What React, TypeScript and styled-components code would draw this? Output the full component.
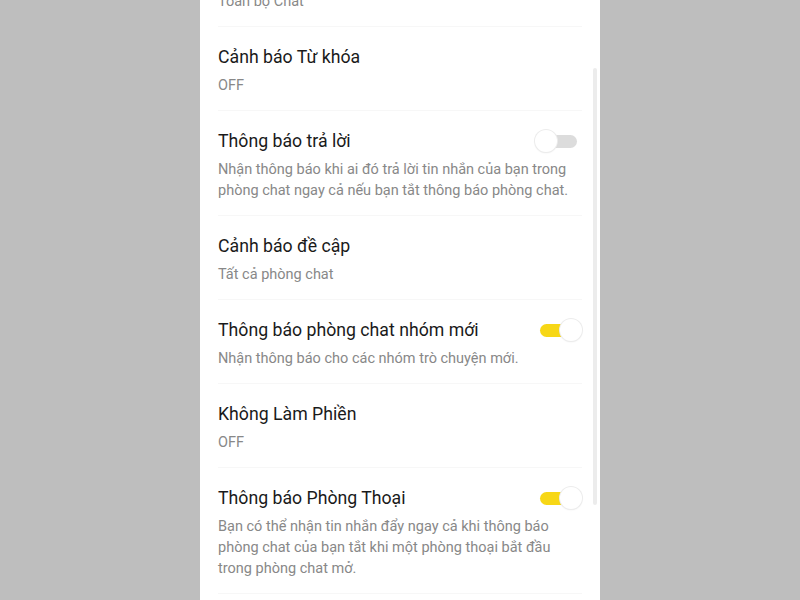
import React, { useLayoutEffect, useRef, useState } from "react";
import styled, { createGlobalStyle } from "styled-components";

type Setting = {
  title: string;
  sub: string;
  toggle?: boolean;
};

const settings: Setting[] = [
  { title: "Xem trước tin nhắn", sub: "Toàn bộ Chat" },
  { title: "Cảnh báo Từ khóa", sub: "OFF" },
  {
    title: "Thông báo trả lời",
    sub: "Nhận thông báo khi ai đó trả lời tin nhắn của bạn trong phòng chat ngay cả nếu bạn tắt thông báo phòng chat.",
    toggle: false,
  },
  { title: "Cảnh báo đề cập", sub: "Tất cả phòng chat" },
  {
    title: "Thông báo phòng chat nhóm mới",
    sub: "Nhận thông báo cho các nhóm trò chuyện mới.",
    toggle: true,
  },
  { title: "Không Làm Phiền", sub: "OFF" },
  {
    title: "Thông báo Phòng Thoại",
    sub: "Bạn có thể nhận tin nhắn đẩy ngay cả khi thông báo phòng chat của bạn tắt khi một phòng thoại bắt đầu trong phòng chat mở.",
    toggle: true,
  },
  { title: "Âm thanh thông báo", sub: "Mặc định" },
];

export default function App() {
  const scrollRef = useRef<HTMLDivElement>(null);
  const [values, setValues] = useState(settings.map((s) => !!s.toggle));

  // the screen is shown scrolled a little down
  useLayoutEffect(() => {
    if (scrollRef.current) scrollRef.current.scrollTop = 57;
  }, []);

  const flip = (i: number) =>
    setValues((v) => v.map((x, j) => (j === i ? !x : x)));

  return (
    <>
      <GlobalStyle />
      <Page>
        <Phone>
          <List ref={scrollRef}>
            {settings.map((s, i) => (
              <Row key={s.title}>
                <TitleLine>
                  <Title>{s.title}</Title>
                  {s.toggle !== undefined && (
                    <Switch on={values[i]} onClick={() => flip(i)}>
                      <Knob />
                    </Switch>
                  )}
                </TitleLine>
                <Sub>{s.sub}</Sub>
              </Row>
            ))}
          </List>
          <ScrollThumb />
        </Phone>
      </Page>
    </>
  );
}

// interface
interface OnProps {
  on: boolean;
}

// styled Components
const GlobalStyle = createGlobalStyle`
  html, body {
    margin: 0;
    padding: 0;
    background: #bebebe;
    font-family: Roboto, "Noto Sans", "Liberation Sans", sans-serif;
  }
`;

const Page = styled.div`
  width: 100%;
  height: 600px;
  display: flex;
  justify-content: center;
`;

const Phone = styled.div`
  width: 400px;
  height: 600px;
  background: #fff;
  position: relative;
  overflow: hidden;
`;

const List = styled.div`
  height: 100%;
  overflow-y: scroll;
  padding: 0 18px;
  box-sizing: border-box;
  scrollbar-width: none;

  &::-webkit-scrollbar {
    display: none;
  }
`;

const Row = styled.div`
  padding: 18px 0 14px;
  border-bottom: 1px solid #f7f7f7;
`;

const TitleLine = styled.div`
  display: flex;
  align-items: center;
  justify-content: space-between;
  height: 24px;
`;

const Title = styled.div`
  font-size: 17.7px;
  line-height: 24px;
  color: #1a1a1a;
`;

const Sub = styled.div`
  margin-top: 6px;
  max-width: 356px;
  font-size: 14.5px;
  line-height: 21px;
  color: #888;
`;

const Switch = styled.div<OnProps>`
  position: relative;
  width: 47px;
  height: 24px;
  flex-shrink: 0;
  display: flex;
  align-items: center;
  justify-content: ${(p) => (p.on ? "flex-end" : "flex-start")};
  cursor: pointer;

  &::before {
    content: "";
    position: absolute;
    left: 5px;
    right: 5px;
    top: 6px;
    height: 13px;
    border-radius: 7px;
    background: ${(p) => (p.on ? "#f7d716" : "#dcdcdc")};
  }
`;

const Knob = styled.div`
  position: relative;
  width: 22px;
  height: 22px;
  border-radius: 50%;
  background: #fff;
  box-shadow: 0 0 0 1px #ececec, 0 1px 2px rgba(0, 0, 0, 0.08);
`;

const ScrollThumb = styled.div`
  position: absolute;
  right: 3px;
  top: 68px;
  width: 4px;
  height: 437px;
  border-radius: 2px;
  background: #ececec;
`;
